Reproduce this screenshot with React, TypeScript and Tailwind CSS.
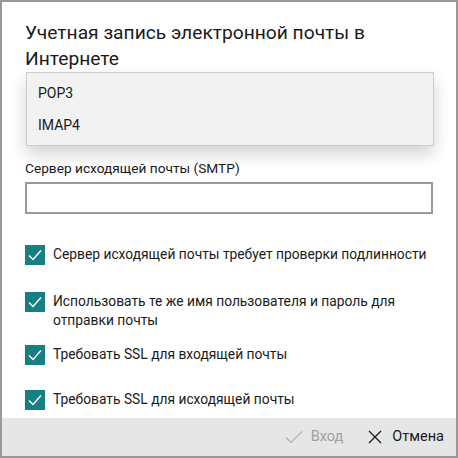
import React from "react";

const font = { fontFamily: 'Roboto, "Noto Sans", sans-serif' };

function Check({ label, className }: { label: React.ReactNode; className?: string }) {
  return (
    <div className={"flex items-start gap-[8px] " + (className ?? "")}>
      <div className="w-[20px] h-[20px] shrink-0 bg-[#167f84] flex items-center justify-center">
        <svg width="14" height="12" viewBox="0 0 14 12" fill="none">
          <path d="M1 6.5 L5 10.5 L13 1.5" stroke="white" strokeWidth="1.4" />
        </svg>
      </div>
      <div className="text-[13.8px] leading-[19px] text-[#1a1a1a] whitespace-nowrap">{label}</div>
    </div>
  );
}

export default function App() {
  return (
    <div
      className="w-[458px] h-[458px] border-2 border-[#999999] bg-white flex flex-col relative overflow-hidden"
      style={font}
    >
      <div className="flex-1 min-h-0 overflow-hidden px-[23px] pt-[18px]">
        <div className="text-[19.2px] leading-[26px] text-[#1a1a1a]">
          Учетная запись электронной почты в<br />Интернете
        </div>
        <div className="h-[86px]" />
        <div className="text-[13.7px] leading-[20px] text-[#1a1a1a] whitespace-nowrap">Сервер исходящей почты (SMTP)</div>
        <div className="mt-[4px] h-[32px] border-2 border-[#9a9a9a] bg-white" />
        <Check className="mt-[31px]" label="Сервер исходящей почты требует проверки подлинности" />
        <Check
          className="mt-[27px]"
          label={
            <>
              Использовать те же имя пользователя и пароль для
              <br />
              отправки почты
            </>
          }
        />
        <Check className="mt-[15px]" label="Требовать SSL для входящей почты" />
        <Check className="mt-[25px]" label="Требовать SSL для исходящей почты" />
      </div>
      <div className="h-[38px] shrink-0 bg-[#e6e6e6] flex items-center justify-end pr-[12px] gap-[25px]">
        <div className="flex items-center gap-[8px] text-[#a0a0a0] text-[14.5px]">
          <svg width="18" height="14" viewBox="0 0 18 14" fill="none">
            <path d="M1 7.5 L6 12.5 L17 1.5" stroke="#b0b0b0" strokeWidth="1.2" />
          </svg>
          <span>Вход</span>
        </div>
        <div className="flex items-center gap-[10px] text-[#1a1a1a] text-[14.5px]">
          <svg width="14" height="14" viewBox="0 0 14 14" fill="none">
            <path d="M1 1 L13 13 M13 1 L1 13" stroke="#1a1a1a" strokeWidth="1.3" />
          </svg>
          <span>Отмена</span>
        </div>
      </div>
      <div className="absolute left-[24px] top-[70px] w-[408px] py-[4px] bg-[#f2f2f2] border border-[#cccccc] shadow-[0_8px_16px_rgba(0,0,0,0.18)]">
        <div className="h-[32px] flex items-center px-[11px] text-[14px] text-[#1a1a1a]">POP3</div>
        <div className="h-[32px] flex items-center px-[11px] text-[14px] text-[#1a1a1a]">IMAP4</div>
      </div>
    </div>
  );
}
